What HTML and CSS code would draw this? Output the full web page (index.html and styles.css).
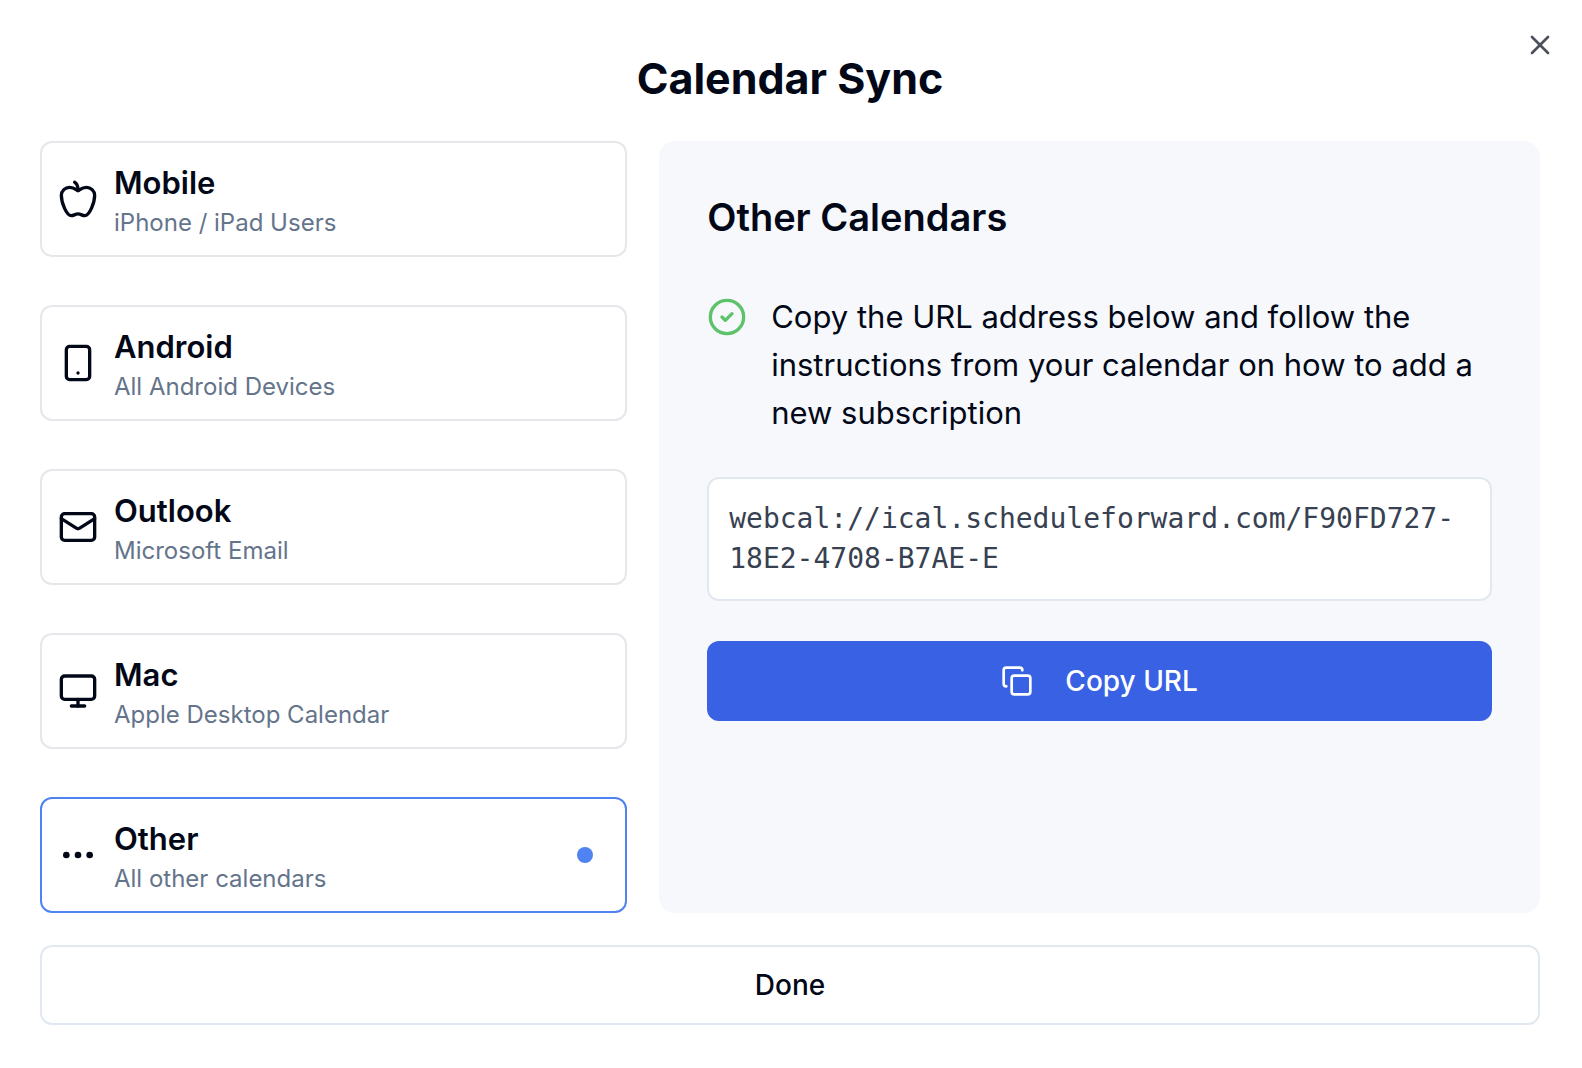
FILE: index.html
```html
<!DOCTYPE html>
<html lang="en">
<head>
<meta charset="UTF-8">
<meta name="viewport" content="width=device-width, initial-scale=1.0">
<title>Calendar Sync</title>
<link rel="stylesheet" href="styles.css">
</head>
<body>

<main class="dialog">
  <button class="close" type="button" aria-label="Close">
    <svg class="icon" viewBox="0 0 24 24"><path d="M18 6 6 18"/><path d="m6 6 12 12"/></svg>
  </button>

  <h1 class="dialog-title">Calendar Sync</h1>

  <div class="columns">
    <!-- Calendar types -->
    <div class="options">
      <button class="option" type="button">
        <svg class="icon" viewBox="0 0 24 24"><path d="M12 20.94c1.5 0 2.75 1.06 4 1.06 3 0 6-8 6-12.22A4.91 4.91 0 0 0 17 5c-2.22 0-4 1.44-5 2-1-.56-2.78-2-5-2a4.9 4.9 0 0 0-5 4.78C2 14 5 22 8 22c1.25 0 2.5-1.06 4-1.06Z"/><path d="M10 2c1 .5 2 2 2 5"/></svg>
        <span class="option-text">
          <span class="option-name">Mobile</span>
          <span class="option-info">iPhone / iPad Users</span>
        </span>
      </button>
      <button class="option" type="button">
        <svg class="icon" viewBox="0 0 24 24"><rect x="5" y="2" width="14" height="20" rx="2"/><path d="M12 18h.01"/></svg>
        <span class="option-text">
          <span class="option-name">Android</span>
          <span class="option-info">All Android Devices</span>
        </span>
      </button>
      <button class="option" type="button">
        <svg class="icon" viewBox="0 0 24 24"><rect x="2" y="4" width="20" height="16" rx="2"/><path d="m22 7-8.97 5.7a1.94 1.94 0 0 1-2.06 0L2 7"/></svg>
        <span class="option-text">
          <span class="option-name">Outlook</span>
          <span class="option-info">Microsoft Email</span>
        </span>
      </button>
      <button class="option" type="button">
        <svg class="icon" viewBox="0 0 24 24"><rect x="2" y="3" width="20" height="14" rx="2"/><path d="M8 21h8"/><path d="M12 17v4"/></svg>
        <span class="option-text">
          <span class="option-name">Mac</span>
          <span class="option-info">Apple Desktop Calendar</span>
        </span>
      </button>
      <button class="option selected" type="button" aria-pressed="true">
        <svg class="icon" viewBox="0 0 24 24"><circle cx="12" cy="12" r="1"/><circle cx="19" cy="12" r="1"/><circle cx="5" cy="12" r="1"/></svg>
        <span class="option-text">
          <span class="option-name">Other</span>
          <span class="option-info">All other calendars</span>
        </span>
        <span class="dot"></span>
      </button>
    </div>

    <!-- Instructions -->
    <section class="panel">
      <h2 class="panel-title">Other Calendars</h2>
      <div class="step">
        <svg class="icon step-icon" viewBox="0 0 24 24"><circle cx="12" cy="12" r="10"/><path d="m9 12 2 2 4-4"/></svg>
        <p class="step-text">Copy the URL address below and follow the instructions from your calendar on how to add a new subscription</p>
      </div>
      <code class="url">webcal://ical.scheduleforward.com/F90FD727-18E2-4708-B7AE-E</code>
      <button class="copy" type="button">
        <svg class="icon" viewBox="0 0 24 24"><rect x="8" y="8" width="14" height="14" rx="2"/><path d="M4 16c-1.1 0-2-.9-2-2V4c0-1.1.9-2 2-2h10c1.1 0 2 .9 2 2"/></svg>
        Copy URL
      </button>
    </section>
  </div>

  <button class="done" type="button">Done</button>
</main>

</body>
</html>
```
FILE: styles.css
```css
* {
  box-sizing: border-box;
}
body {
  margin: 0;
  background-color: #fff;
  color: #020817;
  font-family: Inter, "Liberation Sans", sans-serif;
}
h1, h2, p {
  margin: 0;
}
button {
  font-family: inherit;
  color: inherit;
  cursor: pointer;
}
.dialog {
  position: relative;
  display: flex;
  flex-direction: column;
  gap: 32px;
  padding: 48px 42px 42px 40px;
}
.icon {
  flex-shrink: 0;
  width: 40px;
  height: 40px;
  fill: none;
  stroke: currentColor;
  stroke-width: 2;
  stroke-linecap: round;
  stroke-linejoin: round;
}
.close {
  position: absolute;
  top: 29px;
  right: 26px;
  display: flex;
  padding: 0;
  border: none;
  background: none;
  opacity: 0.7;
}
.close .icon {
  width: 32px;
  height: 32px;
}
.dialog-title {
  font-size: 43px;
  font-weight: 700;
  line-height: 61px;
  text-align: center;
}
.columns {
  display: grid;
  grid-template-columns: 2fr 3fr;
  gap: 32px;
}

/* Left column */
.options {
  display: flex;
  flex-direction: column;
  gap: 48px;
}
.option {
  display: flex;
  align-items: center;
  gap: 16px;
  padding: 12px 32px 12px 16px;
  border: 2px solid #e5e7eb;
  border-radius: 12px;
  background-color: #fff;
  text-align: left;
}
.option.selected {
  border-color: #4f83f1;
}
.option-text {
  flex: 1;
  padding-top: 8px;
}
.option-name,
.option-info {
  display: block;
  line-height: 40px;
}
.option-name {
  font-size: 31px;
  font-weight: 600;
}
.option-info {
  color: #64748b;
  font-size: 24px;
}
.dot {
  width: 16px;
  height: 16px;
  border-radius: 50%;
  background-color: #4f83f1;
}

/* Right column */
.panel {
  padding: 48px;
  border-radius: 16px;
  background-color: #f7f8fc;
}
.panel-title {
  margin-bottom: 40px;
  font-size: 38px;
  font-weight: 600;
  line-height: 56px;
}
.step {
  display: flex;
  gap: 24px;
  margin-bottom: 40px;
}
.step-icon {
  margin-top: 12px;
  color: #5ec26a;
}
.step-text {
  padding-top: 8px;
  font-size: 31px;
  line-height: 48px;
}
.url {
  display: block;
  margin-bottom: 40px;
  padding: 20px;
  border: 2px solid #e2e8f0;
  border-radius: 12px;
  background-color: #fff;
  color: #374151;
  font-family: "DejaVu Sans Mono", monospace;
  font-size: 28px;
  line-height: 40px;
}
.copy,
.done {
  display: flex;
  justify-content: center;
  align-items: center;
  width: 100%;
  height: 80px;
  border-radius: 12px;
  font-size: 28px;
  font-weight: 500;
}
.copy {
  gap: 32px;
  border: none;
  background-color: #3862e3;
  color: #fff;
}
.copy .icon {
  width: 32px;
  height: 32px;
}
.done {
  border: 2px solid #e2e8f0;
  background-color: #fff;
}
```
